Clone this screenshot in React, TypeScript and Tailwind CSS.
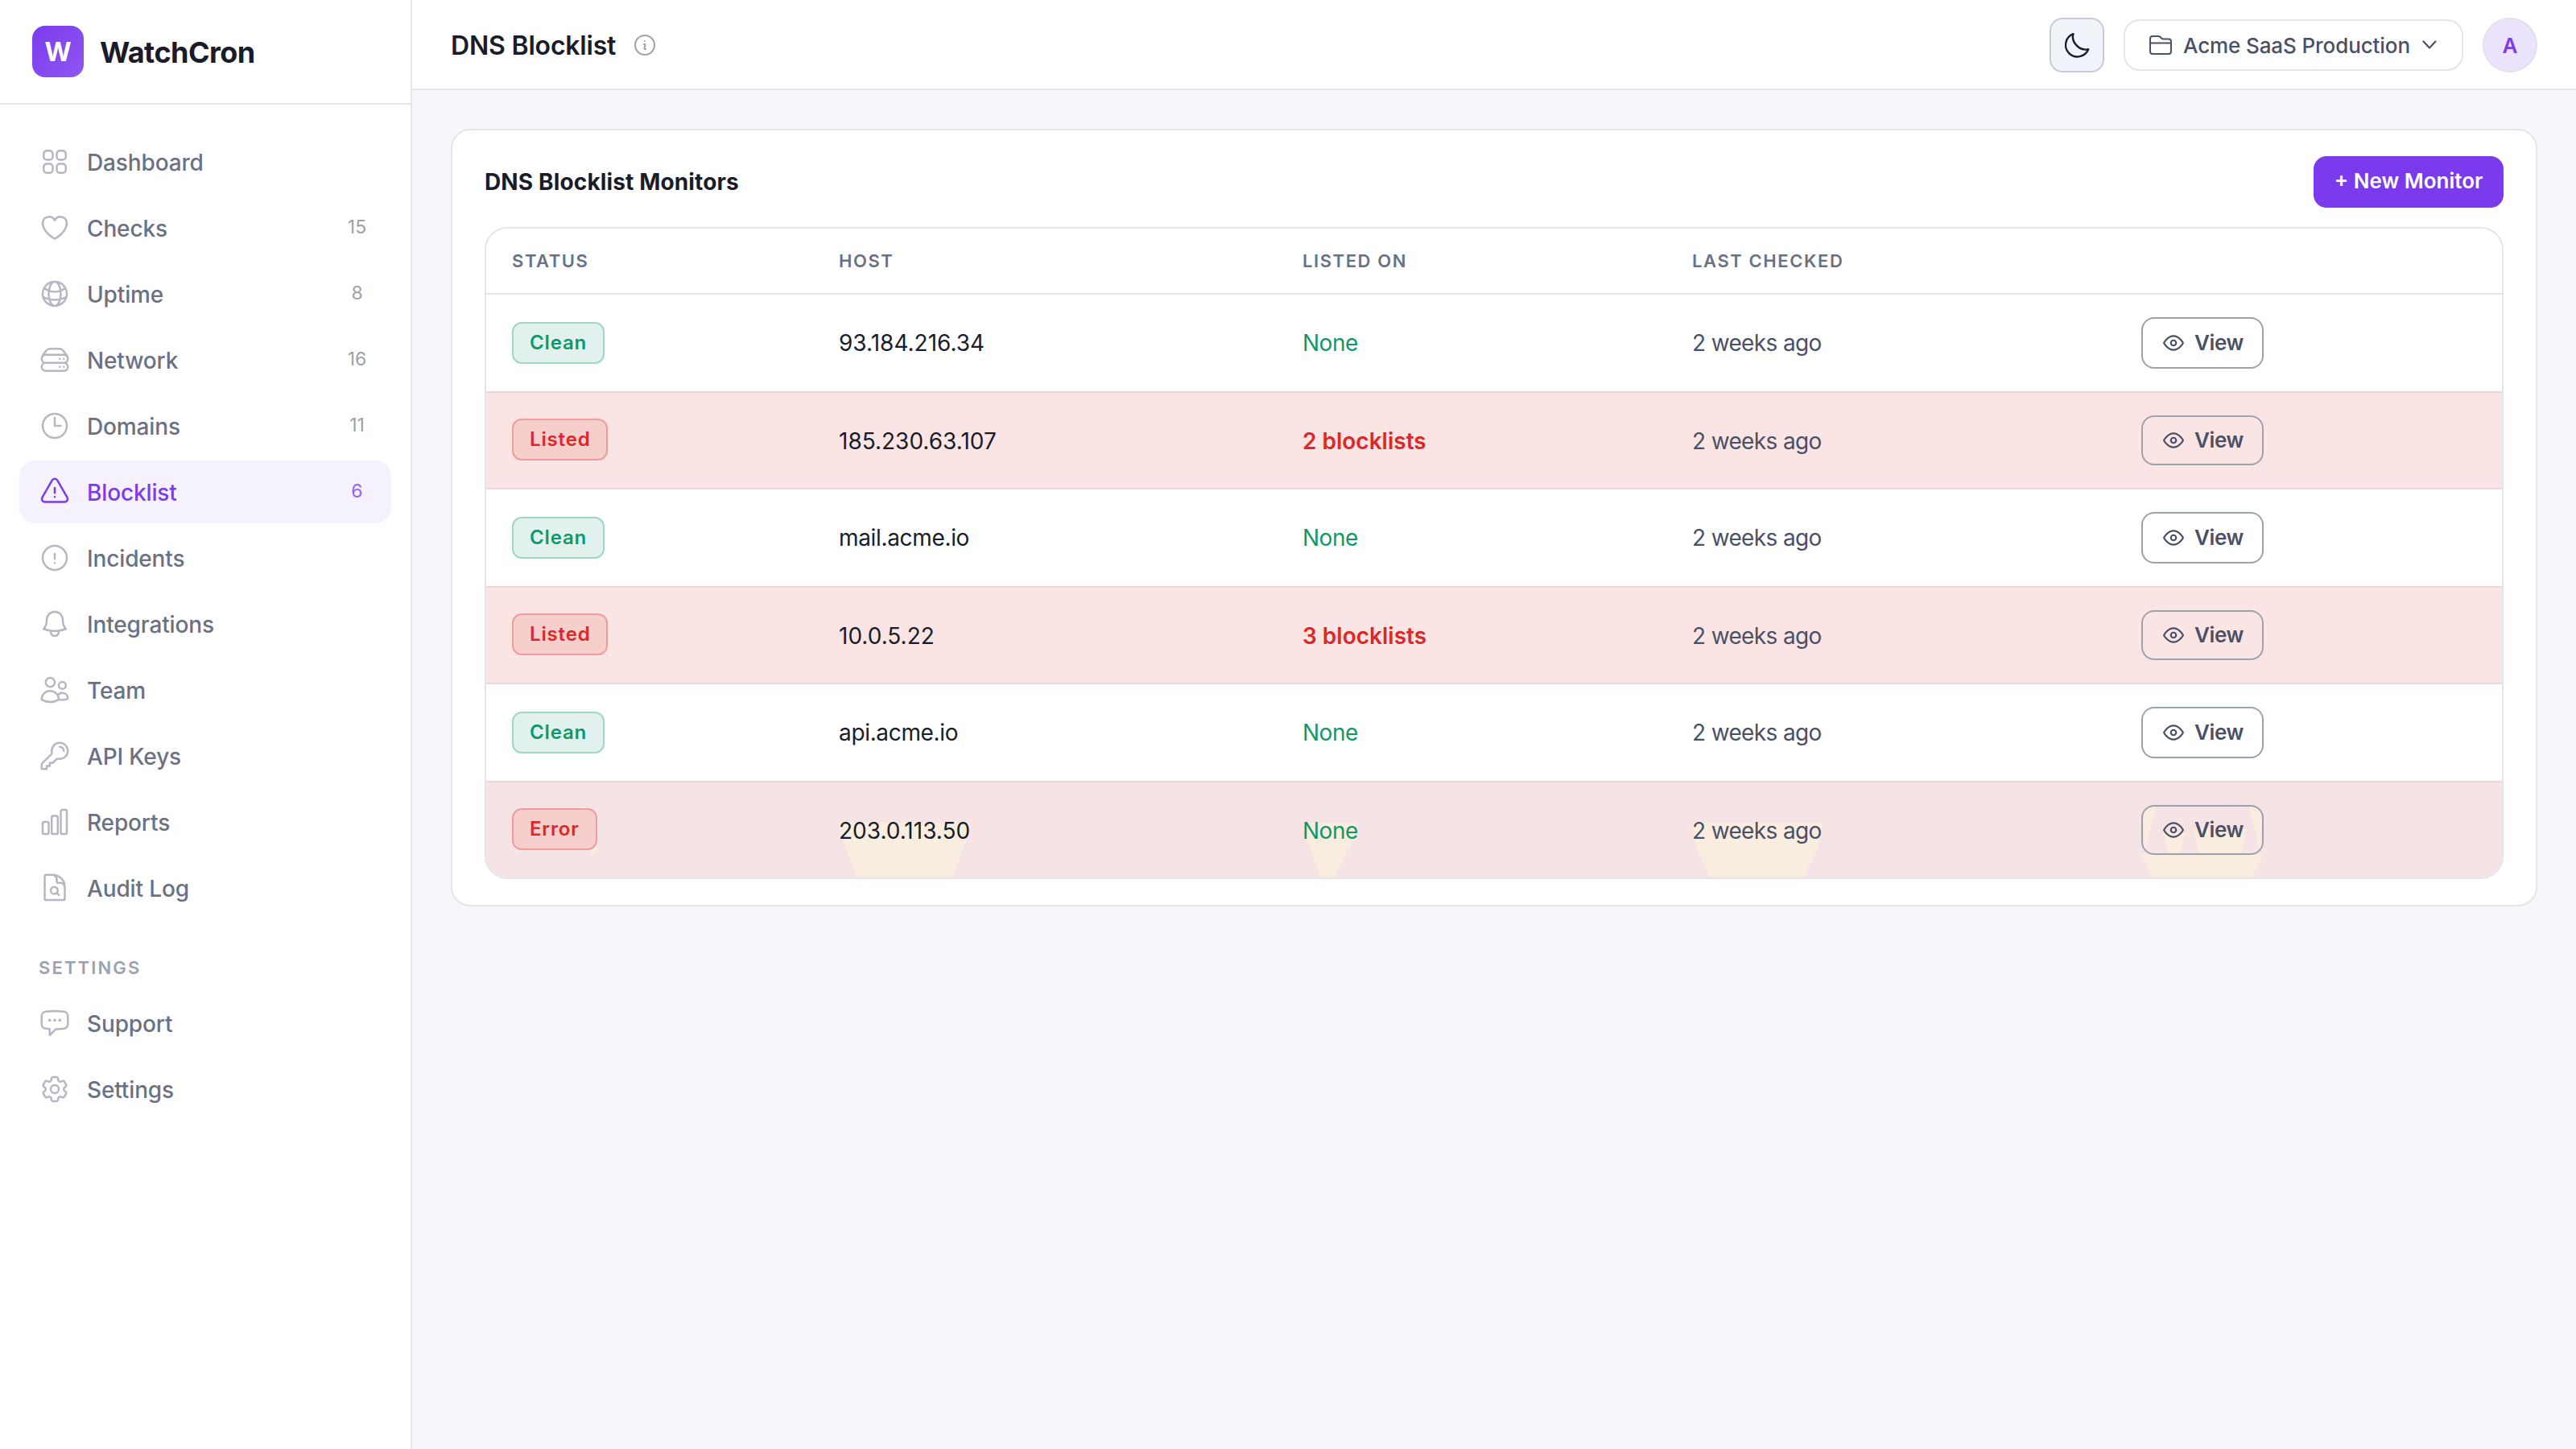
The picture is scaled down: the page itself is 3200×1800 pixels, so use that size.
import type { ReactNode } from "react";
import type { IconType } from "react-icons";
import { FiEye } from "react-icons/fi";
import {
  HiOutlineBell,
  HiOutlineChartBar,
  HiOutlineChatBubbleLeftEllipsis,
  HiOutlineClock,
  HiOutlineCog6Tooth,
  HiOutlineDocumentMagnifyingGlass,
  HiOutlineExclamationCircle,
  HiOutlineExclamationTriangle,
  HiOutlineGlobeAlt,
  HiOutlineHeart,
  HiOutlineInformationCircle,
  HiOutlineKey,
  HiOutlineServerStack,
  HiOutlineSquares2X2,
  HiOutlineUsers,
} from "react-icons/hi2";

type NavItemProps = {
  icon: IconType;
  label: string;
  count?: number;
  active?: boolean;
};

type Monitor = {
  status: "Clean" | "Listed" | "Error";
  host: string;
  listedOn: number;
  lastChecked: string;
};

const mainNav: NavItemProps[] = [
  { icon: HiOutlineSquares2X2, label: "Dashboard" },
  { icon: HiOutlineHeart, label: "Checks", count: 15 },
  { icon: HiOutlineGlobeAlt, label: "Uptime", count: 8 },
  { icon: HiOutlineServerStack, label: "Network", count: 16 },
  { icon: HiOutlineClock, label: "Domains", count: 11 },
  { icon: HiOutlineExclamationTriangle, label: "Blocklist", count: 6, active: true },
  { icon: HiOutlineExclamationCircle, label: "Incidents" },
  { icon: HiOutlineBell, label: "Integrations" },
  { icon: HiOutlineUsers, label: "Team" },
  { icon: HiOutlineKey, label: "API Keys" },
  { icon: HiOutlineChartBar, label: "Reports" },
  { icon: HiOutlineDocumentMagnifyingGlass, label: "Audit Log" },
];

const settingsNav: NavItemProps[] = [
  { icon: HiOutlineChatBubbleLeftEllipsis, label: "Support" },
  { icon: HiOutlineCog6Tooth, label: "Settings" },
];

const monitors: Monitor[] = [
  { status: "Clean", host: "93.184.216.34", listedOn: 0, lastChecked: "2 weeks ago" },
  { status: "Listed", host: "185.230.63.107", listedOn: 2, lastChecked: "2 weeks ago" },
  { status: "Clean", host: "mail.acme.io", listedOn: 0, lastChecked: "2 weeks ago" },
  { status: "Listed", host: "10.0.5.22", listedOn: 3, lastChecked: "2 weeks ago" },
  { status: "Clean", host: "api.acme.io", listedOn: 0, lastChecked: "2 weeks ago" },
  { status: "Error", host: "203.0.113.50", listedOn: 0, lastChecked: "2 weeks ago" },
];

const rowStyles = {
  Clean: "h-[122px] bg-white",
  Listed: "h-[120px] bg-[#fae5e4]",
  Error: "h-[118px] bg-[#f5e3e6]",
};

const badgeStyles = {
  Clean: "border-[#9fd6c4] bg-[#e1f2ee] text-[#109868]",
  Listed: "-top-px border-[#f19c9c] bg-[#f6cecc] text-[#dc2828]",
  Error: "-top-px border-[#f19c9c] bg-[#f6cecc] text-[#dc2828]",
};

function NavItem({ icon: Icon, label, count, active }: NavItemProps) {
  return (
    <a
      className={`mb-1 flex h-[78px] items-center gap-5 rounded-[20px] px-6 text-[28px] font-medium ${
        active ? "bg-[#f5f2fe] text-[#7c3aed]" : "text-[#6b7182]"
      }`}
    >
      <Icon size={40} className={active ? "text-[#7c3aed]" : "text-[#b5b7c2]"} />
      <span className="flex-1 pt-0.5 tracking-[-0.005em]">{label}</span>
      {count !== undefined && (
        <span className={`-mt-0.5 w-[37px] text-center text-[23px] font-normal ${active ? "text-[#9461f0]" : "text-[#9ca1ae]"}`}>
          {count}
        </span>
      )}
    </a>
  );
}

function Sidebar() {
  return (
    <aside className="flex w-[512px] shrink-0 flex-col border-r-2 border-[#e2e5ea] bg-white">
      <div className="flex h-[130px] items-center gap-5 border-b-2 border-[#e2e5ea] pl-10">
        <div className="flex h-16 w-16 items-center justify-center rounded-2xl bg-linear-to-br from-[#7c3aed] to-[#8f56f2] pt-0.5 text-[32px] font-bold text-white">
          W
        </div>
        <span className="pt-0.5 text-[36px] font-bold tracking-[-0.015em] text-[#1a1c29]">WatchCron</span>
      </div>

      <nav className="px-6 pt-8">
        {mainNav.map((item) => (
          <NavItem key={item.label} {...item} />
        ))}
        <div className="mt-[45px] mb-[15px] flex h-[30px] items-center pl-6 text-[22px] font-semibold tracking-[0.097em] text-[#9ca1ae]">
          SETTINGS
        </div>
        {settingsNav.map((item) => (
          <NavItem key={item.label} {...item} />
        ))}
      </nav>
    </aside>
  );
}

function Header() {
  return (
    <header className="flex h-28 items-center justify-between border-b-2 border-[#e2e5ea] bg-white px-12">
      <div className="flex items-center gap-5 pt-0.5">
        <h1 className="pt-0.5 text-[32px] font-semibold tracking-[-0.006em] text-[#1a1c29]">DNS Blocklist</h1>
        <HiOutlineInformationCircle size={32} className="text-[#9ca1ae]" />
      </div>

      <div className="flex items-center gap-6 pt-0.5">
        <button type="button" aria-label="Toggle theme" className="flex h-[68px] w-[68px] items-center justify-center rounded-2xl border-2 border-[#c9cad6] bg-[#f0f3f8]">
          <svg width="31" height="31" viewBox="0 0 31 31" fill="none" stroke="#1a1c29" strokeWidth="2.4" strokeLinejoin="round">
            <path d="M10.5 1.2C7.5 10.5 17.5 22.5 29.2 20.3A14.6 14.6 0 1 1 10.5 1.2Z" />
          </svg>
        </button>

        <button type="button" className="flex h-16 w-[422px] items-center rounded-[20px] border-2 border-[#e2e5ea] bg-white pl-[30px] text-[26px] font-medium text-[#4a5066]">
          <svg width="28" height="24" viewBox="0 0 28 24" fill="none" stroke="currentColor" strokeWidth="2" strokeLinejoin="round">
            <path d="M1 4a3 3 0 0 1 3-3h7.3c.8 0 1.5.3 2 .8l2 2c.5.5 1.2.7 1.9.7H24a3 3 0 0 1 3 3V20a3 3 0 0 1-3 3H4a3 3 0 0 1-3-3ZM1 9.5h26" />
          </svg>
          <span className="ml-[14px] tracking-[-0.004em]">Acme SaaS Production</span>
          <svg className="ml-[15px]" width="18" height="12" viewBox="0 0 18 12" fill="none" stroke="currentColor" strokeWidth="2.2" strokeLinecap="round" strokeLinejoin="round">
            <path d="m1.5 1.5 7.5 8 7.5-8" />
          </svg>
        </button>

        <div className="flex h-[68px] w-[68px] items-center justify-center rounded-full border-2 border-[#e0e2ea] bg-[#ebe3fc] text-[26px] font-semibold text-[#7c3aed]">
          A
        </div>
      </div>
    </header>
  );
}

/* Warm glow that falls below the cells of the errored row */
function RowGlow() {
  return (
    <svg className="absolute top-0 left-0" width="2504" height="118" viewBox="0 0 2504 118" fill="#f9eddf">
      <path d="M438 50h163l-4 20-18 48H461l-19-48Z" />
      <path d="M1014 50h68l-6 24-23 44h-17l-15-44Z" />
      <path d="M1498 50h162l-5 30-19 38H1520l-17-38Z" />
      <path d="M2056 90h152l-15 28H2070Z" />
      <path d="M2058 34l16-4-10 40-4 18ZM2206 34l-16-4 10 40 4 18Z" />
      <path d="M2083 62h28l-7 28H2090ZM2120 58h67l-8 32H2128Z" />
      <path d="M32 72h12l-6 18ZM138 36v50l-8 4Z" />
    </svg>
  );
}

function Cell({ children, className = "" }: { children?: ReactNode; className?: string }) {
  return <td className={`relative px-8 py-0 ${className}`}>{children}</td>;
}

function MonitorRow({ monitor, last }: { monitor: Monitor; last: boolean }) {
  const { status, host, listedOn, lastChecked } = monitor;
  const textOffset = status === "Clean" ? "" : "pt-0.5";
  const isIp = /^[\d.]+$/.test(host);

  return (
    <tr className={`relative ${rowStyles[status]} ${last ? "" : "*:border-b-2 *:border-[#edd8d9]"}`}>
      <td className="px-8 py-0">
        {status === "Error" && <RowGlow />}
        <span className={`relative flex h-[52px] w-fit items-center rounded-xl border-2 px-5 text-[24px] font-semibold tracking-[0.035em] ${badgeStyles[status]}`}>
          {status}
        </span>
      </td>
      <Cell className="text-[#1a1c29]">
        <div className={`${textOffset} ${isIp ? "" : "tracking-[-0.012em]"}`}>{host}</div>
      </Cell>
      <Cell className={listedOn ? "font-semibold text-[#dc2828]" : "tracking-[-0.018em] text-[#109868]"}>
        <div className={textOffset}>{listedOn ? `${listedOn} blocklists` : "None"}</div>
      </Cell>
      <Cell className="tracking-[-0.023em] text-[#4a5066]">
        <div className={textOffset}>{lastChecked}</div>
      </Cell>
      <Cell>
        <button
          type="button"
          className={`flex w-[152px] items-center gap-[13px] rounded-2xl border-2 border-[#9ca1ae] pl-[25px] text-[26px] font-semibold tracking-[-0.015em] text-[#4a5066] ${
            status === "Clean" ? "h-16" : "h-[62px]"
          }`}
        >
          <FiEye size={26} />
          <span className="pb-0.5">View</span>
        </button>
      </Cell>
    </tr>
  );
}

export default function App() {
  return (
    <div className="flex h-[1800px] w-[3200px] overflow-hidden bg-[#f5f7fb] font-['Inter',sans-serif]">
      <Sidebar />

      <div className="flex flex-1 flex-col">
        <Header />

        <main className="p-12">
          <section className="rounded-3xl border-2 border-[#e2e5ea] bg-white px-10 pt-8 pb-8">
            <div className="mb-6 flex items-center justify-between">
              <h2 className="text-[28px] font-bold tracking-[0.005em] text-[#1a1c29]">DNS Blocklist Monitors</h2>
              <button type="button" className="h-16 w-[236px] rounded-2xl bg-[#7c3aed] pb-[3px] text-[26px] font-semibold text-white">
                + New Monitor
              </button>
            </div>

            <div className="overflow-hidden rounded-[28px] border-2 border-[#e2e5ea]">
              <table className="w-full table-fixed border-separate border-spacing-0 text-left text-[28px]">
                <colgroup>
                  <col className="w-[406px]" />
                  <col className="w-[576px]" />
                  <col className="w-[484px]" />
                  <col className="w-[558px]" />
                  <col />
                </colgroup>
                <thead>
                  <tr className="h-[82px] text-[22px] text-[#6b7182] *:border-b-2 *:border-[#e2e5ea] *:px-8 *:font-semibold *:tracking-[0.072em]">
                    <th>STATUS</th>
                    <th>HOST</th>
                    <th>LISTED ON</th>
                    <th>LAST CHECKED</th>
                    <th></th>
                  </tr>
                </thead>
                <tbody>
                  {monitors.map((monitor, i) => (
                    <MonitorRow key={monitor.host} monitor={monitor} last={i === monitors.length - 1} />
                  ))}
                </tbody>
              </table>
            </div>
          </section>
        </main>
      </div>
    </div>
  );
}
